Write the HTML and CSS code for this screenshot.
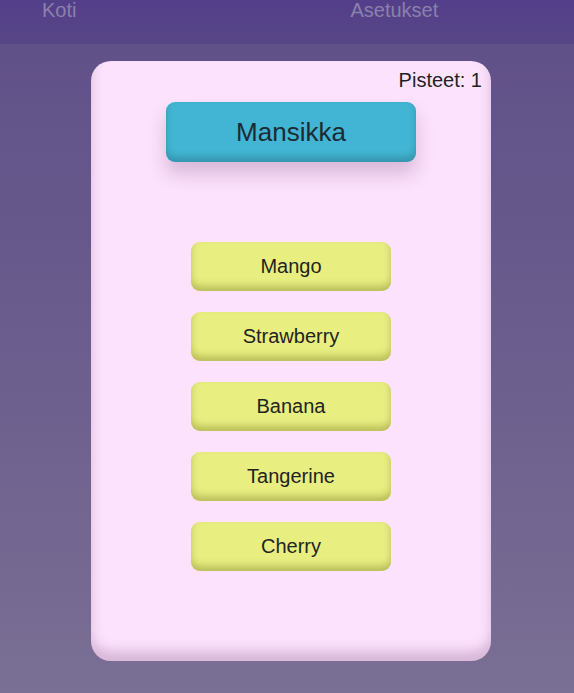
FILE: index.html
```html
<!DOCTYPE html>
<html lang="fi">

<head>
    <meta charset="UTF-8">
    <meta name="viewport" content="width=device-width, initial-scale=1.0">
    <title>Hedelmävisa</title>
    <link rel="stylesheet" href="styles.css">
</head>

<body>
    <nav class="topnav">
        <a href="#" class="nav-link">Koti</a>
        <a href="#" class="nav-link">Asetukset</a>
    </nav>

    <main class="page">
        <div class="quiz-card">
            <div class="score">Pisteet: 1</div>
            <div class="word">Mansikka</div>
            <div class="options">
                <button class="option">Mango</button>
                <button class="option">Strawberry</button>
                <button class="option">Banana</button>
                <button class="option">Tangerine</button>
                <button class="option">Cherry</button>
            </div>
        </div>
    </main>
</body>

</html>
```

FILE: styles.css
```css
html,
body {
    margin: 0;
    padding: 0;
}

body {
    min-height: 693px;
    font-family: "Liberation Sans", Arial, sans-serif;
    background: linear-gradient(to bottom, #5f4f88 0%, #6b5d8d 50%, #7a6f94 100%);
    color: #1f2a30;
}

.topnav {
    height: 44px;
    display: flex;
    align-items: flex-start;
    gap: 274px;
    padding-left: 42px;
    background: linear-gradient(to bottom, #533f8a, #574686);
    box-sizing: border-box;
}

.nav-link {
    font-size: 20px;
    line-height: 20px;
    color: #8a80ad;
    text-decoration: none;
}

.page {
    display: flex;
    justify-content: center;
    padding-top: 17px;
    padding-left: 8px;
    padding-bottom: 32px;
}

.quiz-card {
    width: 400px;
    height: 600px;
    box-sizing: border-box;
    background-color: #fce2fc;
    border-radius: 20px;
    box-shadow: inset 0 -10px 12px rgba(110, 60, 110, 0.25);
    padding: 9px 9px 0 9px;
    display: flex;
    flex-direction: column;
    align-items: center;
}

.score {
    align-self: flex-end;
    font-size: 20px;
    line-height: 20px;
    color: #1f1f28;
}

.word {
    margin-top: 12px;
    width: 250px;
    height: 60px;
    display: flex;
    align-items: center;
    justify-content: center;
    background-color: #41b5d3;
    border-radius: 9px;
    font-size: 26px;
    color: #1c2b33;
    box-shadow: 0 12px 18px rgba(90, 40, 90, 0.22), inset 0 -5px 7px rgba(0, 0, 0, 0.18);
}

.options {
    margin-top: 80px;
    display: flex;
    flex-direction: column;
    gap: 21px;
}

.option {
    width: 200px;
    height: 49px;
    border: none;
    border-radius: 9px;
    background-color: #e8ee80;
    font-family: "Liberation Sans", Arial, sans-serif;
    font-size: 20px;
    color: #1f2422;
    box-shadow: inset 0 -5px 7px rgba(80, 80, 0, 0.3);
    cursor: pointer;
}
```
